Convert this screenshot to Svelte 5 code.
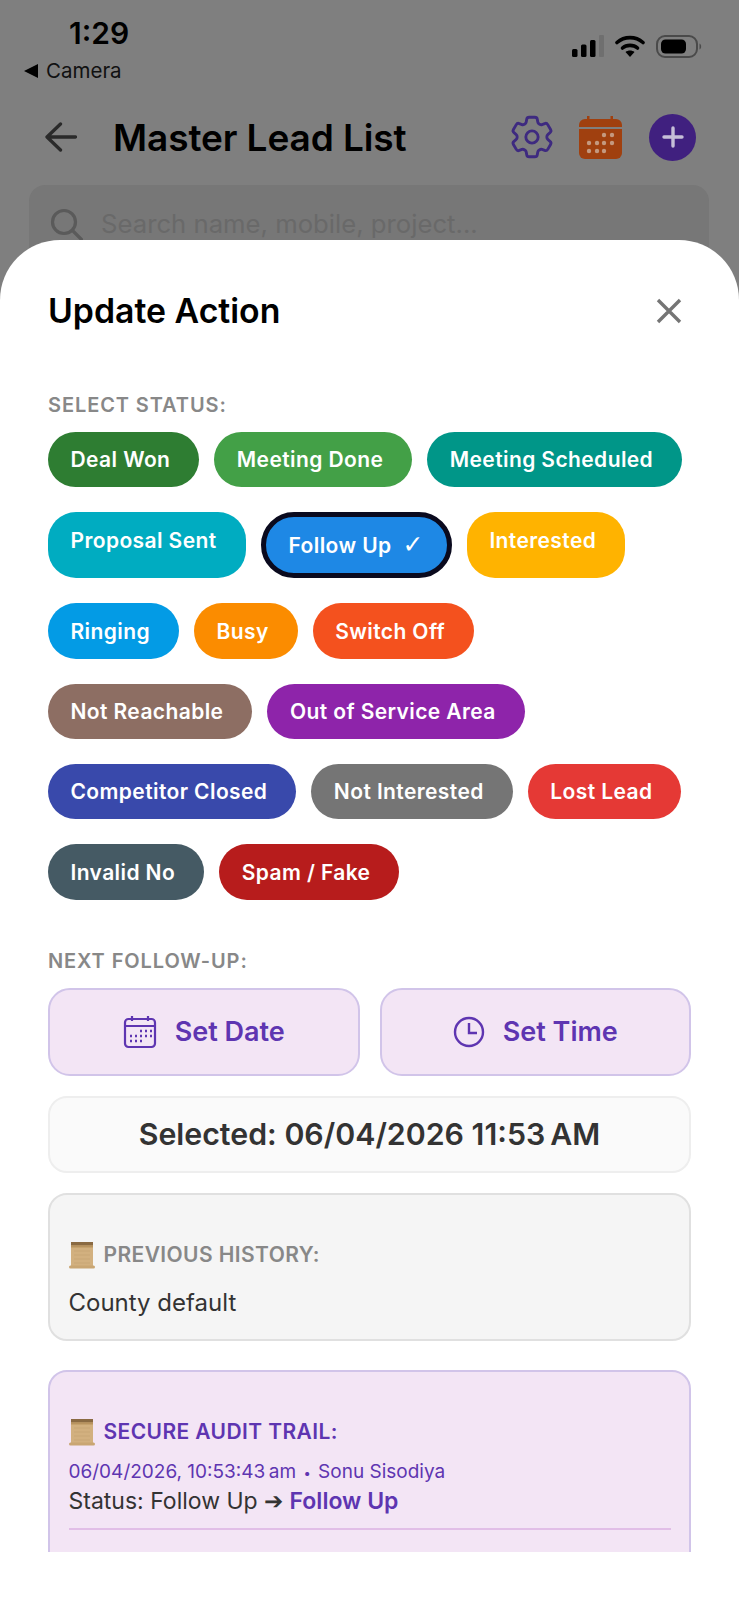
<script lang="ts">
	const statuses = [
		{ label: 'Deal Won', color: '#2e7d32' },
		{ label: 'Meeting Done', color: '#43a047' },
		{ label: 'Meeting Scheduled', color: '#009688' },
		{ label: 'Proposal Sent', color: '#00acc1' },
		{ label: 'Follow Up', color: '#1e88e5', selected: true },
		{ label: 'Interested', color: '#ffb300' },
		{ label: 'Ringing', color: '#039be5' },
		{ label: 'Busy', color: '#fb8c00' },
		{ label: 'Switch Off', color: '#f4511e' },
		{ label: 'Not Reachable', color: '#8d6e63' },
		{ label: 'Out of Service Area', color: '#8e24aa' },
		{ label: 'Competitor Closed', color: '#3949ab' },
		{ label: 'Not Interested', color: '#757575' },
		{ label: 'Lost Lead', color: '#e53935' },
		{ label: 'Invalid No', color: '#455a64' },
		{ label: 'Spam / Fake', color: '#b71c1c' }
	];
</script>

{#snippet scroll()}
	<svg class="scroll-icon" viewBox="0 0 26 28" aria-hidden="true">
		<rect x="2" y="1" width="22" height="25" fill="#d2b07f" />
		<rect x="2" y="1" width="22" height="3.500" fill="#8a6a42" />
		<rect x="2" y="4.500" width="22" height="2" fill="#b8935f" />
		<rect x="0" y="24.500" width="26" height="3" rx="1.500" fill="#c9a673" />
		<path d="M5 10h16M5 14h16M5 18h16M5 22h16" stroke="#c8a677" stroke-width="1" />
	</svg>
{/snippet}

<div class="page">
	<div class="status-bar">
		<div class="status-left">
			<div class="time">1:29</div>
			<div class="camera"><span class="tri"></span>Camera</div>
		</div>
		<div class="status-right">
			<svg width="32" height="22" viewBox="0 0 32 22">
				<rect x="0" y="14" width="5.500" height="8" rx="1.500" fill="#000" />
				<rect x="9" y="9.500" width="5.500" height="12.500" rx="1.500" fill="#000" />
				<rect x="18" y="5" width="5.500" height="17" rx="1.500" fill="#000" />
				<rect x="27" y="0" width="5" height="22" rx="1" fill="#6f6f6f" />
			</svg>
			<svg width="30" height="22" viewBox="0 0 30 22">
				<path d="M2 7.500C9.500 1 20.500 1 28 7.500" fill="none" stroke="#000" stroke-width="3.600" stroke-linecap="round" />
				<path d="M7.500 13C11.500 9.500 18.500 9.500 22.500 13" fill="none" stroke="#000" stroke-width="3.600" stroke-linecap="round" />
				<path d="M10.500 17L15 22L19.500 17C17 15 13 15 10.500 17Z" fill="#000" />
			</svg>
			<svg width="46" height="23" viewBox="0 0 46 23">
				<rect x="1" y="1" width="40" height="21" rx="8" fill="none" stroke="#4a4a4a" stroke-width="2" />
				<rect x="5" y="4.500" width="25" height="14" rx="4.500" fill="#000" />
				<path d="M43.500 8.500c2.200.8 2.200 5.200 0 6z" fill="#4a4a4a" />
			</svg>
		</div>
	</div>

	<header class="topbar">
		<svg class="back" width="32" height="30" viewBox="0 0 32 30">
			<path d="M30.500 15H2.500M15.500 2L2 15l13.500 13" fill="none" stroke="#2a2a2a" stroke-width="3.300" stroke-linecap="round" stroke-linejoin="round" />
		</svg>
		<h1>Master Lead List</h1>
		<div class="actions">
			<svg width="44" height="44" viewBox="2 2 20 20" fill="none" stroke="#3e2a80" stroke-width="1.300" stroke-linejoin="round">
				<path d="M9.594 3.940c.090-.542.560-.940 1.110-.940h2.593c.550 0 1.020.398 1.110.940l.213 1.281c.063.374.313.686.645.870.074.040.147.083.220.127.325.196.720.257 1.075.124l1.217-.456a1.125 1.125 0 0 1 1.370.490l1.296 2.247a1.125 1.125 0 0 1-.260 1.431l-1.003.827c-.293.241-.438.613-.430.992a7.723 7.723 0 0 1 0 .255c-.008.378.137.750.430.991l1.004.827c.424.350.534.955.260 1.430l-1.298 2.247a1.125 1.125 0 0 1-1.369.491l-1.217-.456c-.355-.133-.750-.072-1.076.124a6.470 6.470 0 0 1-.220.128c-.331.183-.581.495-.644.869l-.213 1.281c-.090.543-.560.940-1.110.940h-2.594c-.550 0-1.019-.398-1.110-.940l-.213-1.281c-.062-.374-.312-.686-.644-.870a6.520 6.520 0 0 1-.220-.127c-.325-.196-.720-.257-1.076-.124l-1.217.456a1.125 1.125 0 0 1-1.369-.490l-1.297-2.247a1.125 1.125 0 0 1 .260-1.431l1.004-.827c.292-.240.437-.613.430-.991a6.932 6.932 0 0 1 0-.255c.007-.380-.138-.751-.430-.992l-1.004-.827a1.125 1.125 0 0 1-.260-1.430l1.297-2.247a1.125 1.125 0 0 1 1.370-.491l1.216.456c.356.133.751.072 1.076-.124.072-.044.146-.086.220-.128.332-.183.582-.495.644-.869l.214-1.280Z" />
				<circle cx="12" cy="12" r="2.800" />
			</svg>
			<svg width="43" height="43" viewBox="0 0 43 43">
				<path d="M8 0h2.500v3h21V0H34v3h3a6 6 0 0 1 6 6v2H0V9a6 6 0 0 1 6-6h2z" fill="#a0400f" />
				<path d="M0 13h43v24a6 6 0 0 1-6 6H6a6 6 0 0 1-6-6z" fill="#a0400f" />
				<g fill="#c4997f">
					<circle cx="25" cy="19" r="2.200" /><circle cx="33" cy="19" r="2.200" />
					<circle cx="10" cy="27" r="2.200" /><circle cx="18" cy="27" r="2.200" /><circle cx="25" cy="27" r="2.200" /><circle cx="33" cy="27" r="2.200" />
					<circle cx="10" cy="35" r="2.200" /><circle cx="18" cy="35" r="2.200" /><circle cx="25" cy="35" r="2.200" />
				</g>
			</svg>
			<div class="add">
				<svg width="22" height="22" viewBox="0 0 22 22"><path d="M11 2v18M2 11h18" stroke="#c6bfd8" stroke-width="3.400" stroke-linecap="round" /></svg>
			</div>
		</div>
	</header>

	<div class="search">
		<svg width="33" height="33" viewBox="0 0 33 33">
			<circle cx="14" cy="14" r="11.500" fill="none" stroke="#5a5a5a" stroke-width="3.200" />
			<path d="M22.500 22.500l9 9" stroke="#5a5a5a" stroke-width="3.200" stroke-linecap="round" />
		</svg>
		<span>Search name, mobile, project...</span>
	</div>

	<section class="sheet">
		<div class="sheet-head">
			<h2>Update Action</h2>
			<svg width="26" height="26" viewBox="0 0 26 26">
				<path d="M2 2l22 22M24 2L2 24" stroke="#757575" stroke-width="3.400" />
			</svg>
		</div>

		<div class="sheet-body">
			<div class="label first">SELECT STATUS:</div>
			<div class="chips">
				{#each statuses as s}
					<div class="chip" class:selected={s.selected} style="background:{s.color}">
						{s.label}{#if s.selected}<span class="check">✓</span>{/if}
					</div>
				{/each}
			</div>

			<div class="label next">NEXT FOLLOW-UP:</div>
			<div class="pickers">
				<button class="picker">
					<svg width="34" height="34" viewBox="0 0 34 34" fill="none" stroke="#5e35b1" stroke-width="2.200">
						<rect x="2" y="4" width="30" height="28" rx="3.500" />
						<path d="M2 11h30M9 1v5M25 1v5" />
						<path d="M17 16h2M22 16h2M27 16h2M7 21h2M12 21h2M17 21h2M22 21h2M27 21h2M7 26h2M12 26h2M17 26h2" stroke-width="2.400" />
					</svg>
					Set Date
				</button>
				<button class="picker">
					<svg width="32" height="32" viewBox="0 0 32 32" fill="none" stroke="#5e35b1" stroke-width="2.400">
						<circle cx="16" cy="16" r="14" />
						<path d="M16 7v10h8" />
					</svg>
					Set Time
				</button>
			</div>
			<div class="selected-box">Selected: 06/04/2026 11:53&#8239;AM</div>

			<div class="history">
				<div class="box-title">{@render scroll()}PREVIOUS HISTORY:</div>
				<div class="history-text">County default</div>
			</div>

			<div class="audit">
				<div class="box-title purple">{@render scroll()}SECURE AUDIT TRAIL:</div>
				<div class="audit-entry">
					<div class="audit-meta">06/04/2026, 10:53:43&#8239;am <span class="dot">•</span> Sonu Sisodiya</div>
					<div class="audit-change">Status: Follow Up ➔ <b>Follow Up</b></div>
				</div>
			</div>
		</div>
	</section>
</div>

<style>
	:global(body) {
		margin: 0;
		background: #fff;
	}

	.page {
		position: relative;
		width: 739px;
		height: 1600px;
		overflow: hidden;
		background: #7f7f7f;
		font-family: Inter, 'Liberation Sans', sans-serif;
		color: #000;
	}

	.status-bar {
		height: 100px;
		display: flex;
		justify-content: space-between;
		box-sizing: border-box;
		padding: 15px 37px 0 24px;
	}

	.time {
		font-size: 30px;
		font-weight: 600;
		line-height: 36px;
		margin-left: 45px;
	}

	.camera {
		font-size: 20.500px;
		line-height: 26px;
		margin-top: 7px;
		display: flex;
		align-items: center;
		gap: 8px;
		color: #111;
	}

	.tri {
		width: 0;
		height: 0;
		border-style: solid;
		border-width: 7px 14px 7px 0;
		border-color: transparent #000 transparent transparent;
	}

	.status-right {
		display: flex;
		align-items: center;
		gap: 11px;
		height: 62px;
	}

	.topbar {
		height: 74px;
		display: flex;
		align-items: center;
		padding: 0 43px 0 45px;
	}

	.back {
		margin-right: 36px;
	}

	h1 {
		margin: 2px 0 0;
		font-size: 37px;
		font-weight: 600;
		letter-spacing: -0.1px;
		line-height: 44px;
	}

	.actions {
		margin-left: auto;
		display: flex;
		align-items: center;
		gap: 25px;
	}

	.add {
		width: 47px;
		height: 47px;
		margin-left: 2px;
		border-radius: 50%;
		background: #40207f;
		display: flex;
		align-items: center;
		justify-content: center;
	}

	.search {
		margin: 11px 30px 0 29px;
		height: 84px;
		box-sizing: border-box;
		padding: 23px 0 0 21px;
		border-radius: 16px;
		background: #777777;
		display: flex;
		align-items: flex-start;
		gap: 18px;
		font-size: 25.700px;
		line-height: 32px;
		color: #696969;
	}

	.sheet {
		position: absolute;
		left: 0;
		right: 0;
		top: 240px;
		bottom: 0;
		display: flex;
		flex-direction: column;
		background: #fff;
		border-radius: 60px 60px 0 0;
		padding: 51px 48px 48px;
		box-sizing: border-box;
	}

	.sheet-head {
		display: flex;
		justify-content: space-between;
		align-items: center;
		height: 40px;
		padding-right: 9px;
		flex: none;
	}

	h2 {
		margin: 0;
		font-size: 33.800px;
		font-weight: 600;
		line-height: 40px;
	}

	.sheet-body {
		flex: 1;
		min-height: 0;
		overflow: hidden;
	}

	.label {
		font-size: 20px;
		font-weight: 600;
		line-height: 24px;
		letter-spacing: 0.9px;
		color: #888;
	}

	.label.first {
		margin-top: 62px;
	}

	.label.next {
		margin-top: 49px;
	}

	.chips {
		display: flex;
		flex-wrap: wrap;
		gap: 25px 15px;
		margin-top: 15px;
	}

	.chip {
		padding: 15.400px 29px 15px 22.500px;
		border-radius: 28px;
		font-size: 21px;
		font-weight: 600;
		line-height: 25px;
		letter-spacing: 0.4px;
		color: #fff;
		box-sizing: border-box;
	}

	.chip.selected {
		padding-left: 23px;
		padding-right: 23px;
		padding-bottom: 15.500px;
		border: 5.600px solid #0a0a1e;
		border-radius: 34px;
	}

	.check {
		margin-left: 11px;
		font-family: 'DejaVu Sans', sans-serif;
		font-size: 25px;
		line-height: 20px;
		font-weight: 400;
	}

	.pickers {
		display: grid;
		grid-template-columns: 1fr 1fr;
		gap: 20px;
		margin-top: 15px;
	}

	.picker {
		height: 88px;
		display: flex;
		align-items: center;
		justify-content: center;
		gap: 18px;
		background: #f3e5f5;
		border: 2px solid #d1c4e9;
		border-radius: 22px;
		font-family: inherit;
		font-size: 27px;
		font-weight: 600;
		color: #5e35b1;
	}

	.selected-box {
		margin-top: 20px;
		height: 77px;
		box-sizing: border-box;
		display: flex;
		align-items: center;
		justify-content: center;
		background: #fafafa;
		border: 2px solid #eeeeee;
		border-radius: 19px;
		font-size: 30.300px;
		font-weight: 600;
		color: #333;
	}

	.history,
	.audit {
		box-sizing: border-box;
		border-radius: 19px;
		border: 2px solid #e0e0e0;
		padding: 47px 18.500px 0;
	}

	.history {
		margin-top: 20px;
		height: 148px;
		background: #f5f5f5;
	}

	.audit {
		margin-top: 29px;
		height: 300px;
		background: #f3e5f5;
		border-color: #d1c4e9;
	}

	.box-title {
		display: flex;
		align-items: center;
		gap: 9px;
		height: 26px;
		font-size: 21px;
		font-weight: 600;
		letter-spacing: 0.4px;
		color: #888;
	}

	.box-title.purple {
		color: #5e35b1;
	}

	.scroll-icon {
		width: 26px;
		height: 28px;
	}

	.history-text {
		margin-top: 21px;
		font-size: 24px;
		line-height: 28px;
		color: #333;
	}

	.audit-entry {
		margin-top: 15px;
		padding-bottom: 13px;
		border-bottom: 2px solid #e1bee7;
	}

	.audit-meta {
		font-size: 19px;
		line-height: 24px;
		color: #5e35b1;
	}

	.dot {
		font-size: 13px;
		padding: 0 2px;
	}

	.audit-change {
		margin-top: 2px;
		font-size: 23px;
		line-height: 28px;
		color: #333;
	}

	.audit-change b {
		font-weight: 600;
		color: #5e35b1;
	}
</style>
